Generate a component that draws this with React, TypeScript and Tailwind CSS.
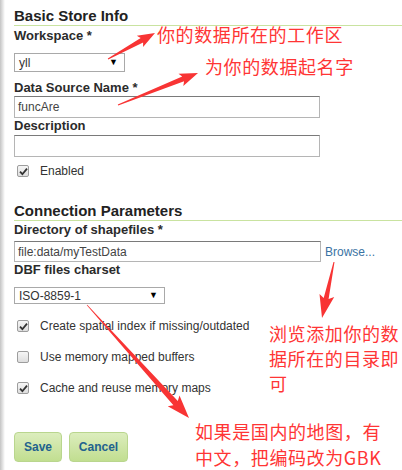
import React from 'react';

type Pt = [number, number];

function arrowPoints(tail: Pt, tip: Pt, tailW: number, shaftW: number, headW: number, headL: number) {
  const dx = tip[0] - tail[0];
  const dy = tip[1] - tail[1];
  const len = Math.hypot(dx, dy);
  const ux = dx / len;
  const uy = dy / len;
  const nx = -uy;
  const ny = ux;
  const bx = tip[0] - ux * headL;
  const by = tip[1] - uy * headL;
  const wx = tip[0] - ux * headL * 1.15;
  const wy = tip[1] - uy * headL * 1.15;
  const pts: Pt[] = [
    [tail[0] + (nx * tailW) / 2, tail[1] + (ny * tailW) / 2],
    [bx + (nx * shaftW) / 2, by + (ny * shaftW) / 2],
    [wx + (nx * headW) / 2, wy + (ny * headW) / 2],
    tip,
    [wx - (nx * headW) / 2, wy - (ny * headW) / 2],
    [bx - (nx * shaftW) / 2, by - (ny * shaftW) / 2],
    [tail[0] - (nx * tailW) / 2, tail[1] - (ny * tailW) / 2],
  ];
  return pts.map((p) => `${p[0].toFixed(1)},${p[1].toFixed(1)}`).join(' ');
}

const arrows = [
  arrowPoints([108, 59], [155, 33], 1, 5, 13, 15),
  arrowPoints([118, 105], [198, 73], 1, 5, 13, 16),
  arrowPoints([334, 262], [322, 318], 1, 5, 15, 20),
  arrowPoints([87, 305], [189, 418], 0.5, 6, 16, 20),
];

function CheckBox({ checked }: { checked: boolean }) {
  return (
    <span className="flex h-[12px] w-[12px] items-center justify-center rounded-[2px] border border-[#9d9d9d] bg-gradient-to-b from-[#f6f6f6] to-[#dedede]">
      {checked && (
        <svg width="9" height="9" viewBox="0 0 9 9">
          <path d="M1 4.6 L3.4 7.2 L8 1.6" fill="none" stroke="#333" strokeWidth="1.8" />
        </svg>
      )}
    </span>
  );
}

function Option({ checked, label, className }: { checked: boolean; label: string; className: string }) {
  return (
    <div className={`flex h-[16px] items-center ${className}`}>
      <span className="ml-[3px] w-[23px]">
        <CheckBox checked={checked} />
      </span>
      <span className="text-[12px] leading-[16px] text-[#333]">{label}</span>
    </div>
  );
}

function Select({ value, width, height, className }: { value: string; width: string; height: string; className: string }) {
  return (
    <div
      className={`flex items-center justify-between border border-[#a9a9a9] bg-white pl-[4px] pr-[6px] text-[12px] text-[#333] ${width} ${height} ${className}`}
    >
      <span>{value}</span>
      <span className="text-[9px] leading-none text-black">▼</span>
    </div>
  );
}

export default function App() {
  const label = 'text-[13px] font-bold leading-[16px] text-[#2b2b2b]';
  const heading = 'border-b border-[#c9e3a0] text-[15px] font-bold leading-[18px] text-[#222]';
  const input = 'border border-[#b5b5b5] border-t-[#7a7a7a] bg-white pl-[3px] text-[12px] text-[#444] flex items-center';
  const note = 'absolute text-[18px] tracking-[0.6px] text-[#ff3535]';
  const cjk = { fontFamily: '"Noto Sans CJK SC", sans-serif' };

  return (
    <div
      className="relative flex min-h-[470px] w-[402px] overflow-hidden bg-white"
      style={{ fontFamily: '"Liberation Sans", Arial, sans-serif' }}
    >
      <div className="w-[5px] shrink-0 bg-gradient-to-r from-[#c4c4c4] to-white" />
      <div className="flex-1 pl-[9px]">
        <div className={`mt-[7px] ${heading}`}>Basic Store Info</div>
        <div className={`mt-[2px] ${label}`}>Workspace *</div>
        <Select value="yll" width="w-[111px]" height="h-[19px]" className="mt-[9px]" />
        <div className={`mt-[8px] ${label}`}>Data Source Name *</div>
        <div className={`h-[22px] w-[306px] ${input}`}>funcAre</div>
        <div className={label}>Description</div>
        <div className={`mt-[1px] h-[22px] w-[306px] ${input}`} />
        <Option checked label="Enabled" className="mt-[6px]" />

        <div className={`mt-[23px] ${heading}`}>Connection Parameters</div>
        <div className={`mt-[1px] ${label}`}>Directory of shapefiles *</div>
        <div className="mt-[3px] flex items-center">
          <div className={`h-[21px] w-[307px] ${input}`}>file:data/myTestData</div>
          <span className="ml-[4px] text-[12px] text-[#3a73a3]">Browse...</span>
        </div>
        <div className={label}>DBF files charset</div>
        <Select value="ISO-8859-1" width="w-[151px]" height="h-[17px]" className="mt-[9px]" />

        <Option checked label="Create spatial index if missing/outdated" className="mt-[14px]" />
        <Option checked={false} label="Use memory mapped buffers" className="mt-[15px]" />
        <Option checked label="Cache and reuse memory maps" className="mt-[15px]" />

        <div className="mt-[36px] flex gap-[7px]">
          <button className="h-[30px] w-[48px] rounded-[4px] border border-[#b9d68e] bg-gradient-to-b from-[#dcedbd] to-[#c1de90] text-[12px] font-bold text-[#22628e]">
            Save
          </button>
          <button className="h-[30px] w-[59px] rounded-[4px] border border-[#b9d68e] bg-gradient-to-b from-[#dcedbd] to-[#c1de90] text-[12px] font-bold text-[#22628e]">
            Cancel
          </button>
        </div>
      </div>

      <svg className="pointer-events-none absolute left-0 top-0" width="402" height="470">
        {arrows.map((p, i) => (
          <polygon key={i} points={p} fill="#f83434" />
        ))}
      </svg>

      <div className={`${note} left-[157px] top-[25px] leading-[18px]`} style={cjk}>
        你的数据所在的工作区
      </div>
      <div className={`${note} left-[205px] top-[57px] leading-[18px]`} style={cjk}>
        为你的数据起名字
      </div>
      <div className={`${note} left-[269px] top-[321px] w-[132px] leading-[25px]`} style={cjk}>
        浏览添加你的数据所在的目录即可
      </div>
      <div className={`${note} left-[195px] top-[422px] flex flex-col gap-[8px] leading-[18px]`} style={cjk}>
        <span>如果是国内的地图，有</span>
        <span>中文，把编码改为GBK</span>
      </div>
    </div>
  );
}
